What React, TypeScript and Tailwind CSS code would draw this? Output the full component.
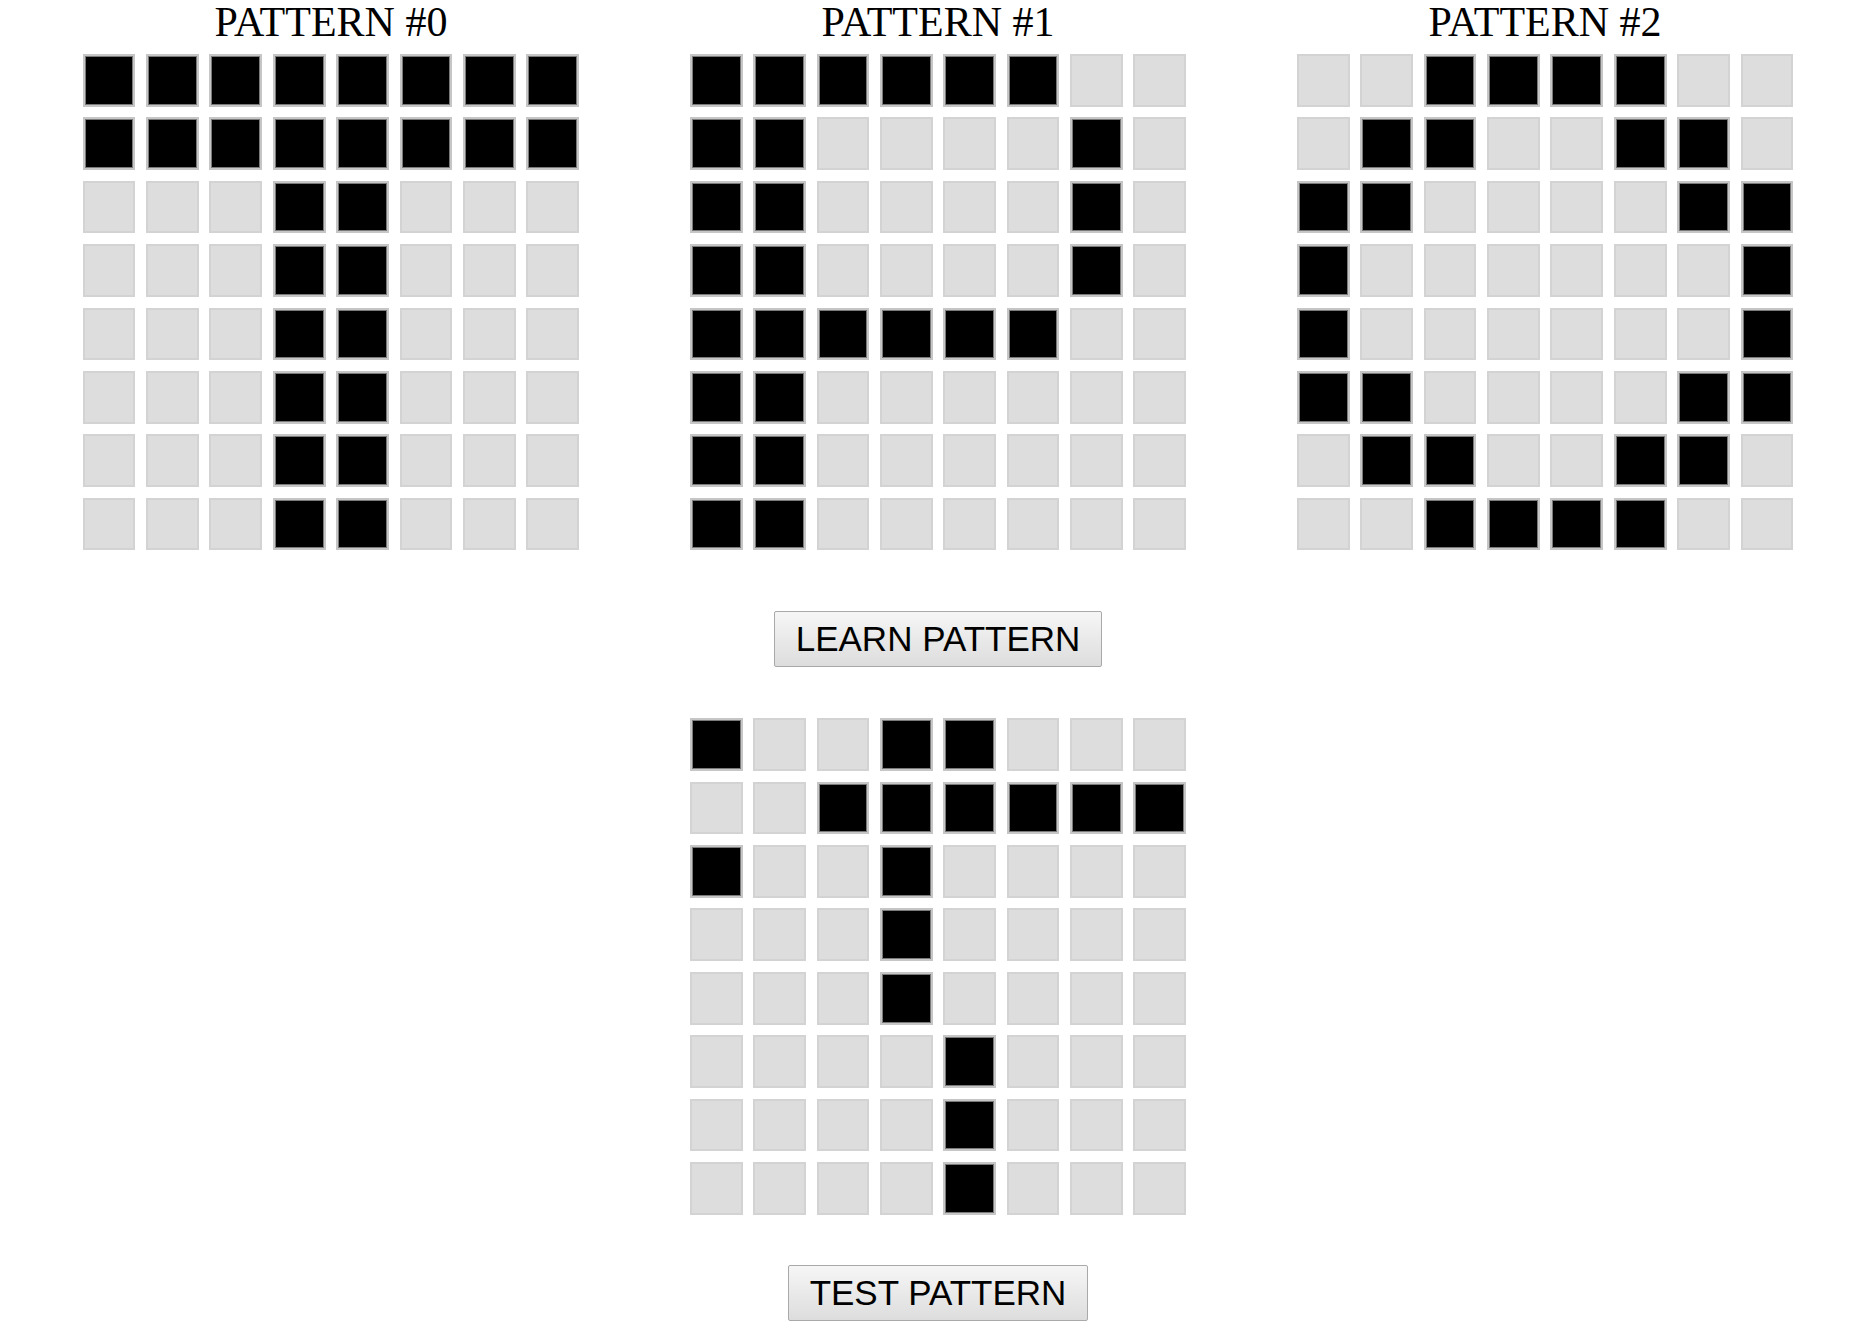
import React from "react";

const patterns = [
  [
    "11111111",
    "11111111",
    "00011000",
    "00011000",
    "00011000",
    "00011000",
    "00011000",
    "00011000",
  ],
  [
    "11111100",
    "11000010",
    "11000010",
    "11000010",
    "11111100",
    "11000000",
    "11000000",
    "11000000",
  ],
  [
    "00111100",
    "01100110",
    "11000011",
    "10000001",
    "10000001",
    "11000011",
    "01100110",
    "00111100",
  ],
];

const testPattern = [
  "10011000",
  "00111111",
  "10010000",
  "00010000",
  "00010000",
  "00001000",
  "00001000",
  "00001000",
];

function Grid({ rows }: { rows: string[] }) {
  return (
    <div className="grid grid-cols-[repeat(8,52.7px)] auto-rows-[52.7px] gap-[10.7px]">
      {rows.flatMap((row, r) =>
        row.split("").map((c, i) =>
          c === "1" ? (
            <div
              key={`${r}-${i}`}
              className="bg-black border-2 border-[#c6c6c6] shadow-[inset_0_0_0_1px_#7a7a7a]"
            />
          ) : (
            <div key={`${r}-${i}`} className="bg-[#dddddd] border-2 border-[#d3d3d3]" />
          )
        )
      )}
    </div>
  );
}

function Button({ label }: { label: string }) {
  return (
    <button className="h-[56px] px-[21px] border border-[#a9a9a9] rounded-[2px] bg-gradient-to-b from-[#f6f6f6] to-[#dddddd] text-black text-[35px] leading-[40px] font-['Liberation_Sans',Arial,sans-serif]">
      {label}
    </button>
  );
}

export default function App() {
  return (
    <div className="min-h-screen bg-white pl-[22px] flex flex-col items-center">
      <div className="flex gap-[110.8px]">
        {patterns.map((p, idx) => (
          <div key={idx} className="flex flex-col items-center">
            <h2 className="h-[54px] text-[42px] leading-[44px] font-normal text-black whitespace-nowrap font-['Liberation_Serif','Times_New_Roman',serif]">
              PATTERN #{idx}
            </h2>
            <Grid rows={p} />
          </div>
        ))}
      </div>
      <div className="mt-[61px]">
        <Button label="LEARN PATTERN" />
      </div>
      <div className="mt-[51px]">
        <Grid rows={testPattern} />
      </div>
      <div className="mt-[50px]">
        <Button label="TEST PATTERN" />
      </div>
    </div>
  );
}
